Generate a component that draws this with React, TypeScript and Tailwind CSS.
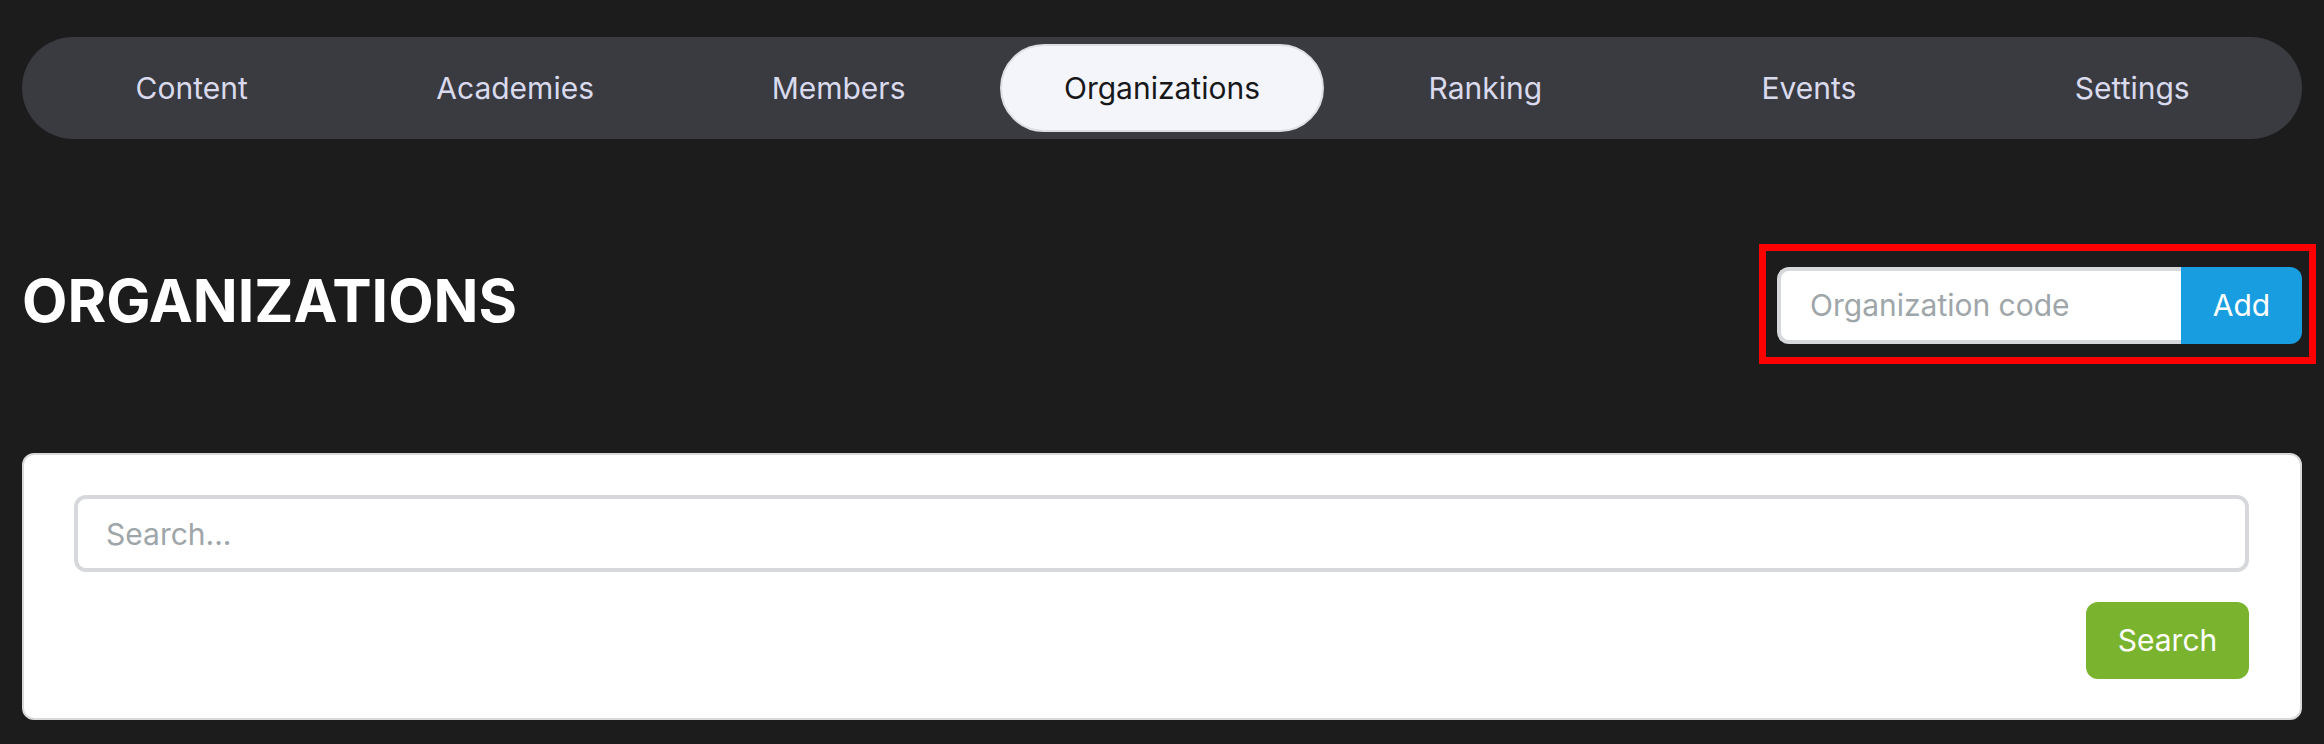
import { useState } from 'react';

const tabs = ['Content', 'Academies', 'Members', 'Organizations', 'Ranking', 'Events', 'Settings'];

export default function App() {
  const [active, setActive] = useState('Organizations');

  return (
    <div className="min-h-screen bg-[#1c1c1c] px-[22px] pt-[37px] font-['Inter','Noto_Sans',sans-serif]">
      <nav className="flex rounded-full bg-[#3a3b40] px-[8px] py-[7px]">
        {tabs.map((t) => (
          <button
            key={t}
            onClick={() => setActive(t)}
            className={
              t === active
                ? 'flex-1 h-[88px] rounded-full border-2 border-[#dedfe3] bg-[#f4f5fa] text-[30px] text-[#18181b]'
                : 'flex-1 h-[88px] rounded-full border-2 border-transparent text-[30px] text-[#d9daee]'
            }>
            {t}
          </button>
        ))}
      </nav>

      <div className="mt-[128px] flex items-center justify-between">
        <h1 className="mb-[11px] text-[59px] leading-none font-bold text-white">ORGANIZATIONS</h1>
        <div className="relative flex h-[77px]">
          <input
            placeholder="Organization code"
            className="w-[404px] rounded-l-[12px] border-4 border-r-0 border-[#d6d8db] bg-white pl-[29px] text-[30px] text-gray-800 outline-none placeholder:text-[#9ea6a9]"
          />
          <button className="w-[121px] rounded-r-[12px] bg-[#189ee0] text-[30px] text-white">Add</button>
          <div className="pointer-events-none absolute -top-[23px] -bottom-[20px] -left-[18px] -right-[14px] border-[7px] border-[#ff0000]" />
        </div>
      </div>

      <div className="mt-[109px] rounded-[12px] border-2 border-[#d9d9d9] bg-white pt-[40px] pr-[51px] pb-[39px] pl-[50px]">
        <input
          placeholder="Search..."
          className="block h-[77px] w-full rounded-[12px] border-4 border-[#d6d8db] pl-[28px] text-[30px] text-gray-800 outline-none placeholder:text-[#9ea6a9]"
        />
        <div className="mt-[30px] flex justify-end">
          <button className="h-[77px] w-[163px] rounded-[12px] bg-[#7ab32e] text-[30px] text-white">Search</button>
        </div>
      </div>
    </div>
  );
}
